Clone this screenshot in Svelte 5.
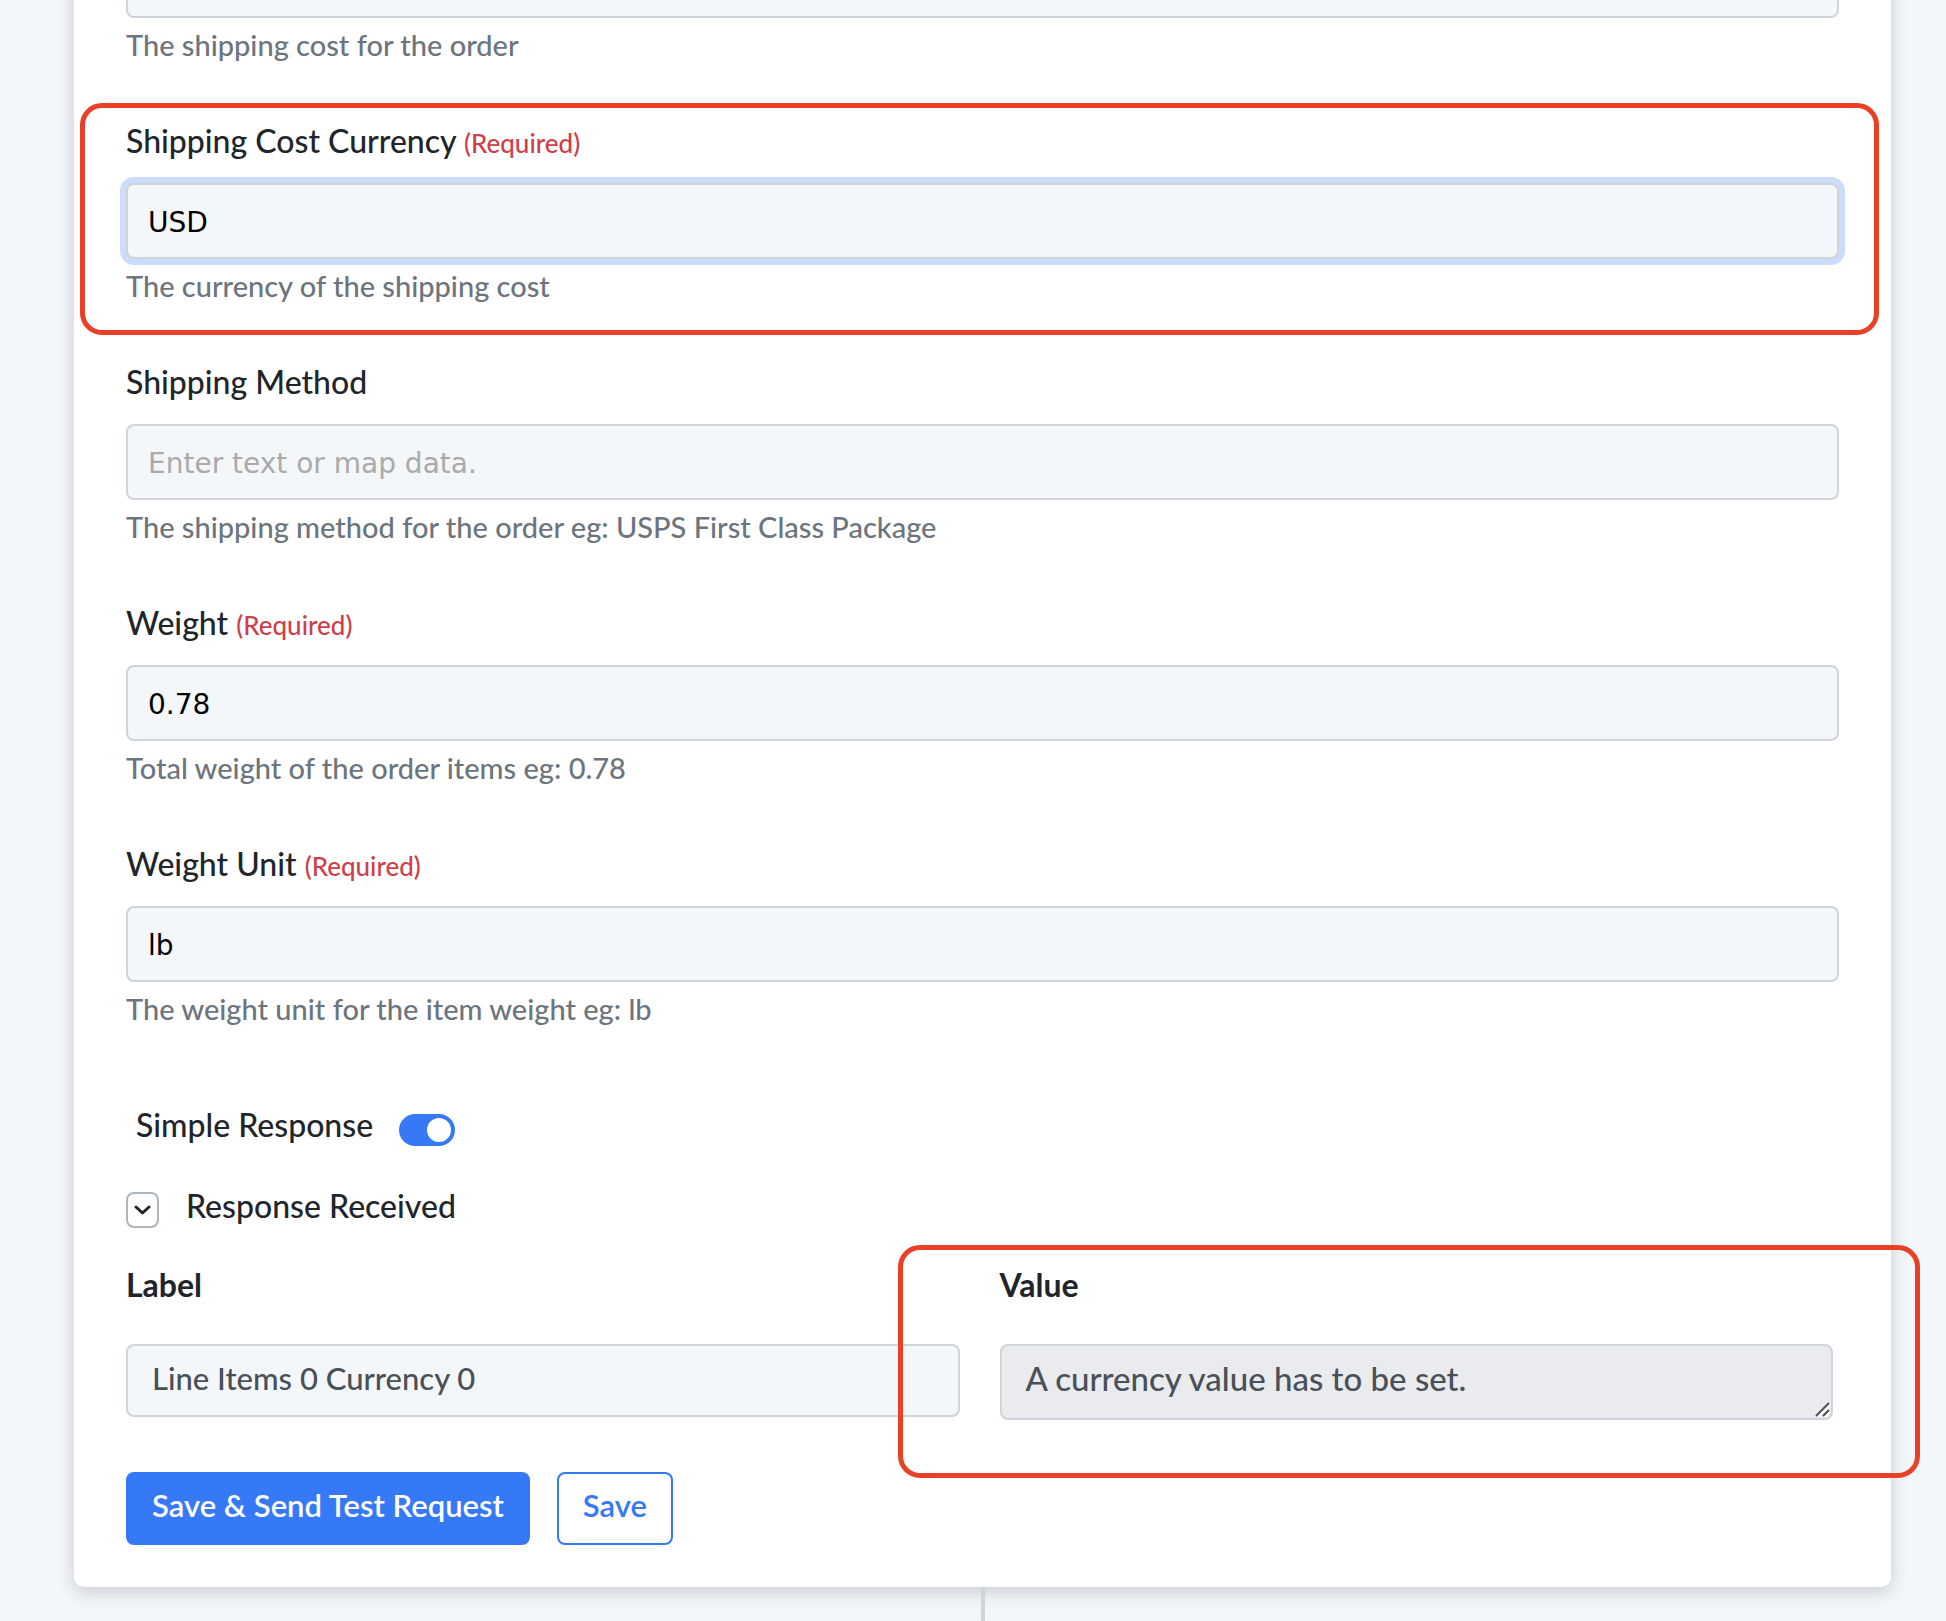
<script>
  let fields = [
    { id: 'shipping-cost', label: '', required: false, value: '', help: 'The shipping cost for the order' },
    { id: 'shipping-cost-currency', label: 'Shipping Cost Currency', required: true, value: 'USD', help: 'The currency of the shipping cost', active: true },
    { id: 'shipping-method', label: 'Shipping Method', required: false, value: '', help: 'The shipping method for the order eg: USPS First Class Package' },
    { id: 'weight', label: 'Weight', required: true, value: '0.78', help: 'Total weight of the order items eg: 0.78' },
    { id: 'weight-unit', label: 'Weight Unit', required: true, value: 'lb', help: 'The weight unit for the item weight eg: lb' }
  ];

  let simpleResponse = true;
  let showResponse = true;
  let responseLabel = 'Line Items 0 Currency 0';
  let responseValue = 'A currency value has to be set.';
</script>

<div class="page">
  <form class="card" on:submit|preventDefault>
    {#each fields as field}
      <div class="field">
        {#if field.label}
          <label class="field-label" for={field.id}>
            {field.label}
            {#if field.required}<span class="required">(Required)</span>{/if}
          </label>
        {/if}
        <input
          id={field.id}
          class="field-input"
          class:active={field.active}
          type="text"
          aria-label={field.label ? null : 'Shipping Cost'}
          placeholder="Enter text or map data."
          bind:value={field.value} />
        <p class="help">{field.help}</p>
        {#if field.active}
          <div class="highlight highlight-field"></div>
        {/if}
      </div>
    {/each}

    <div class="switch-row">
      <label for="simple-response">Simple Response</label>
      <input id="simple-response" class="switch" type="checkbox" role="switch" bind:checked={simpleResponse} />
    </div>

    <div class="response-row">
      <button
        class="toggle"
        type="button"
        aria-label="Toggle response received"
        aria-expanded={showResponse}
        on:click={() => (showResponse = !showResponse)}>
        <svg width="17" height="10" viewBox="0 0 17 10" fill="none" stroke="#212529" stroke-width="3" stroke-linecap="round" stroke-linejoin="round">
          <path d="M2 2l6.5 6L15 2" />
        </svg>
      </button>
      <span>Response Received</span>
    </div>

    {#if showResponse}
      <div class="response">
        <div class="column">
          <label class="column-label" for="response-label">Label</label>
          <input id="response-label" class="response-input" type="text" bind:value={responseLabel} />
        </div>
        <div class="column">
          <label class="column-label" for="response-value">Value</label>
          <div class="textarea-wrap">
            <textarea id="response-value" class="response-textarea" rows="1" readonly bind:value={responseValue}></textarea>
            <svg class="grip" width="16" height="16" viewBox="0 0 16 16" fill="none" stroke-width="2">
              <path d="M3 15L15 3M10 15l5-5" stroke="#fff" />
              <path d="M1 14L14 1M8 14l6-6" stroke="#4d5054" />
            </svg>
          </div>
          <div class="highlight highlight-value"></div>
        </div>
      </div>
    {/if}

    <div class="actions">
      <button class="btn primary" type="submit">Save &amp; Send Test Request</button>
      <button class="btn outline" type="button">Save</button>
    </div>
  </form>
  <div class="connector"></div>
</div>

<style>
  :global(body) {
    background: #f3f7fa;
  }

  .page {
    display: flex;
    flex-direction: column;
    align-items: center;
    height: 100vh;
    overflow: hidden;
    padding: 0 55px 0 74px;
    box-sizing: border-box;
    font-family: Lato, "Open Sans", sans-serif;
    font-size: 32px;
    font-weight: 500;
    line-height: 38px;
    color: #212529;
  }

  .card {
    flex: none;
    width: 100%;
    margin-top: -100px;
    padding: 42px 52px;
    box-sizing: border-box;
    background: #fff;
    border-radius: 10px;
    box-shadow: 0 5px 18px rgba(33, 37, 41, 0.2);
  }

  input,
  textarea,
  button {
    box-sizing: border-box;
    margin: 0;
    font: inherit;
    outline: none;
  }

  .field {
    position: relative;
    margin-bottom: 60px;
  }

  .field-label {
    display: block;
    margin-bottom: 23px;
  }

  .required {
    font-size: 26px;
    line-height: 26px;
    color: #cf3f49;
  }

  .field-input {
    display: block;
    width: 100%;
    height: 76px;
    padding: 2px 20px 0;
    border: 2px solid #ced4da;
    border-radius: 8px;
    background: #f3f7fa;
    font-family: "DejaVu Sans", Verdana, sans-serif;
    font-size: 28px;
    font-weight: 400;
    color: #000;
  }

  .field-input::placeholder {
    color: #aaa;
  }

  .field-input.active {
    box-shadow: 0 0 0 6px #ccdcfe;
  }

  .help {
    margin: 10px 0 0;
    font-size: 29px;
    line-height: 34px;
    color: #6c757d;
  }

  /* outlines lie over the form and take no space */
  .highlight {
    position: absolute;
    border: 5px solid #ea4025;
    border-radius: 22px;
    pointer-events: none;
  }

  .highlight-field {
    inset: -19px -40px -32px -46px;
  }

  .highlight-value {
    inset: -21px -87px -58px -102px;
  }

  .switch-row {
    display: flex;
    align-items: flex-start;
    gap: 26px;
    margin-top: 80px;
    padding-left: 10px;
  }

  .switch {
    appearance: none;
    width: 56px;
    height: 32px;
    margin-top: 8px;
    padding: 4px;
    border-radius: 16px;
    background: #adb5bd;
    cursor: pointer;
  }

  .switch::before {
    content: "";
    display: block;
    width: 24px;
    height: 24px;
    border-radius: 50%;
    background: #fff;
  }

  .switch:checked {
    background: #3579f7;
  }

  .switch:checked::before {
    margin-left: auto;
  }

  .response-row {
    display: flex;
    align-items: flex-start;
    gap: 27px;
    margin-top: 41px;
  }

  .toggle {
    display: flex;
    align-items: center;
    justify-content: center;
    width: 33px;
    height: 36px;
    margin-top: 5px;
    padding: 0;
    border: 2px solid #adb5bd;
    border-radius: 8px;
    background: #fff;
    cursor: pointer;
  }

  .response {
    display: grid;
    grid-template-columns: 1fr 1fr;
    gap: 40px;
    margin: 38px 6px 0 0;
  }

  .column {
    position: relative;
  }

  .column-label {
    display: block;
    margin-bottom: 40px;
    font-weight: 700;
  }

  .response-input,
  .response-textarea {
    display: block;
    width: 100%;
    height: 73px;
    padding: 0 24px 6px;
    border: 2px solid #ced4da;
    border-radius: 8px;
    background: #f3f7fa;
    font-size: 31px;
    color: #495057;
  }

  .textarea-wrap {
    position: relative;
  }

  .response-textarea {
    height: 76px;
    padding: 12px 24px;
    background: #e9ebef;
    overflow: hidden;
    font-size: 33px;
    line-height: 40px;
    resize: none;
  }

  .grip {
    position: absolute;
    right: 2px;
    bottom: 2px;
    pointer-events: none;
  }

  .actions {
    display: flex;
    gap: 27px;
    margin-top: 52px;
  }

  .btn {
    height: 73px;
    padding: 0 24px 8px;
    border: 2px solid #3579f7;
    border-radius: 8px;
    font-size: 31px;
    font-weight: 600;
    cursor: pointer;
  }

  .primary {
    background: #3579f7;
    color: #fff;
  }

  .outline {
    background: #fff;
    color: #3579f7;
  }

  .connector {
    flex: 1;
    width: 4px;
    background: #ced4da;
  }
</style>
